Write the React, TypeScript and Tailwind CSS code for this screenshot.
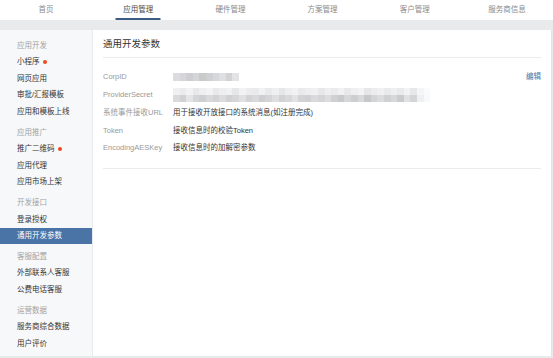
const navItems = ['首页', '应用管理', '硬件管理', '方案管理', '客户管理', '服务商信息'];

type MenuItem = { label: string; dot?: boolean; active?: boolean };
type MenuGroup = { title: string; items: MenuItem[] };

const menu: MenuGroup[] = [
  {
    title: '应用开发',
    items: [{ label: '小程序', dot: true }, { label: '网页应用' }, { label: '审批/汇报模板' }, { label: '应用和模板上线' }],
  },
  {
    title: '应用推广',
    items: [{ label: '推广二维码', dot: true }, { label: '应用代理' }, { label: '应用市场上架' }],
  },
  {
    title: '开发接口',
    items: [{ label: '登录授权' }, { label: '通用开发参数', active: true }],
  },
  {
    title: '客服配置',
    items: [{ label: '外部联系人客服' }, { label: '公费电话客服' }],
  },
  {
    title: '运营数据',
    items: [{ label: '服务商综合数据' }, { label: '用户评价' }],
  },
];

// 模糊处理的敏感值（马赛克色块）
const corpBlocks = ['#dcdcde', '#d6d5d8', '#cfcdd2', '#d3d5d6', '#c9cbcb', '#cfd0d2', '#d6d7da', '#dedfe1', '#d2d2d4', '#e3e3e5'];
const secretTop = ['#f0f0f2', '#ebebed', '#f2f2f4', '#e8e8eb', '#efeff1', '#f3f3f4', '#e9e9ec', '#eeeeef', '#f0f1f2', '#e6e7e9', '#f2f2f2', '#ececee', '#eaeaec', '#f1f1f3', '#e8e9ea', '#efeff0', '#e5e6e8', '#eeeeef', '#f2f2f3', '#e9e9eb', '#ededef', '#f0f0f1', '#e7e7e9', '#eeeeee', '#e9eaeb', '#f1f1f2', '#e8e8ea', '#efeff1', '#f3f3f4', '#e6e6e8', '#ececed', '#f0f0f2', '#e9eaec', '#eeeff0', '#eaeaeb', '#f2f2f3', '#e7e8ea', '#f4f5f7', '#fafbfc'];
const secretBottom = ['#dadadd', '#d1d1d4', '#e4e4e6', '#d5d6d9', '#cfcfd2', '#d8d9db', '#d3d3d6', '#dcdcdf', '#d0d1d3', '#d6d6d8', '#e0e0e2', '#d2d3d5', '#d9d9dc', '#cdced1', '#d4d4d7', '#dededf', '#d1d2d4', '#d8d8da', '#e2e2e4', '#d3d3d5', '#cfd0d3', '#dadadc', '#d5d5d8', '#dcdddf', '#d0d0d2', '#c8c9ca', '#d6d7d9', '#cdcecf', '#d9d9db', '#c6c8c9', '#d3d4d6', '#dcdcdd', '#cfd1d3', '#d7d8da', '#cacbcd', '#e0e1e3', '#d4d5d7', '#eef0f3', '#f8f9fb'];

const Blocks = ({ colors, h = 'h-[7px]' }: { colors: string[]; h?: string }) => (
  <div className={`flex ${h}`}>
    {colors.map((c, i) => (
      <div key={i} className="h-full w-[6.6px]" style={{ background: c }} />
    ))}
  </div>
);

const params: { label: string; value: React.ReactNode }[] = [
  { label: 'CorpID', value: <Blocks colors={corpBlocks} h="h-[8px]" /> },
  {
    label: 'ProviderSecret',
    value: (
      <div className="flex flex-col">
        <Blocks colors={secretTop} />
        <Blocks colors={secretBottom} />
      </div>
    ),
  },
  { label: '系统事件接收URL', value: '用于接收开放接口的系统消息(如注册完成)' },
  { label: 'Token', value: '接收信息时的校验Token' },
  { label: 'EncodingAESKey', value: '接收信息时的加解密参数' },
];

export default function App() {
  return (
    <div
      className="w-[553px] h-[358px] overflow-hidden bg-[#e9eaec] text-[7.5px]"
      style={{ fontFamily: '"Liberation Sans", "Noto Sans CJK SC", sans-serif' }}
    >
      {/* 顶部导航 */}
      <div className="flex h-[20px] bg-white">
        {navItems.map((n, i) => (
          <div key={n} className="relative flex flex-1 items-center justify-center">
            <span className={i === 1 ? 'text-[#4a4a4a]' : 'text-[#8a8a8a]'}>{n}</span>
            {i === 1 && <div className="absolute bottom-0 left-1/2 h-[2px] w-[45px] -translate-x-1/2 bg-[#3d5a80]" />}
          </div>
        ))}
      </div>

      <div className="mt-[10px] flex h-[326px] gap-px pr-px">
        {/* 左侧菜单 */}
        <div className="w-[92px] bg-[#f7f8fa] pt-[7px]">
          {menu.map((g) => (
            <div key={g.title} className="mb-[4px]">
              <div className="flex h-[16.6px] items-center pl-[17px] text-[#a3a3a3]">{g.title}</div>
              {g.items.map((it) => (
                <div
                  key={it.label}
                  className={`flex h-[16.6px] items-center pl-[17px] ${
                    it.active ? 'bg-[#4a73a6] text-white' : 'text-[#333]'
                  }`}
                >
                  {it.label}
                  {it.dot && <span className="ml-[3px] h-[4px] w-[4px] rounded-full bg-[#f0481f]" />}
                </div>
              ))}
            </div>
          ))}
        </div>

        {/* 内容区 */}
        <div className="flex-1 border-r border-[#e3e3e3] bg-white px-[10px]">
          <div className="flex h-[28px] items-center border-b border-[#ebebeb] pt-[2px] text-[9.5px] text-[#333]">
            通用开发参数
          </div>
          <div className="relative border-b border-[#ebebeb] pt-[10px] pb-[11px]">
            <span className="absolute right-0 top-[13px] text-[#4a73a6]">编辑</span>
            {params.map((p) => (
              <div key={p.label} className="flex h-[17.75px] items-center">
                <div className="w-[70px] text-[#9a9a9a]">{p.label}</div>
                <div className="text-[#333]">{p.value}</div>
              </div>
            ))}
          </div>
        </div>
      </div>
    </div>
  );
}
